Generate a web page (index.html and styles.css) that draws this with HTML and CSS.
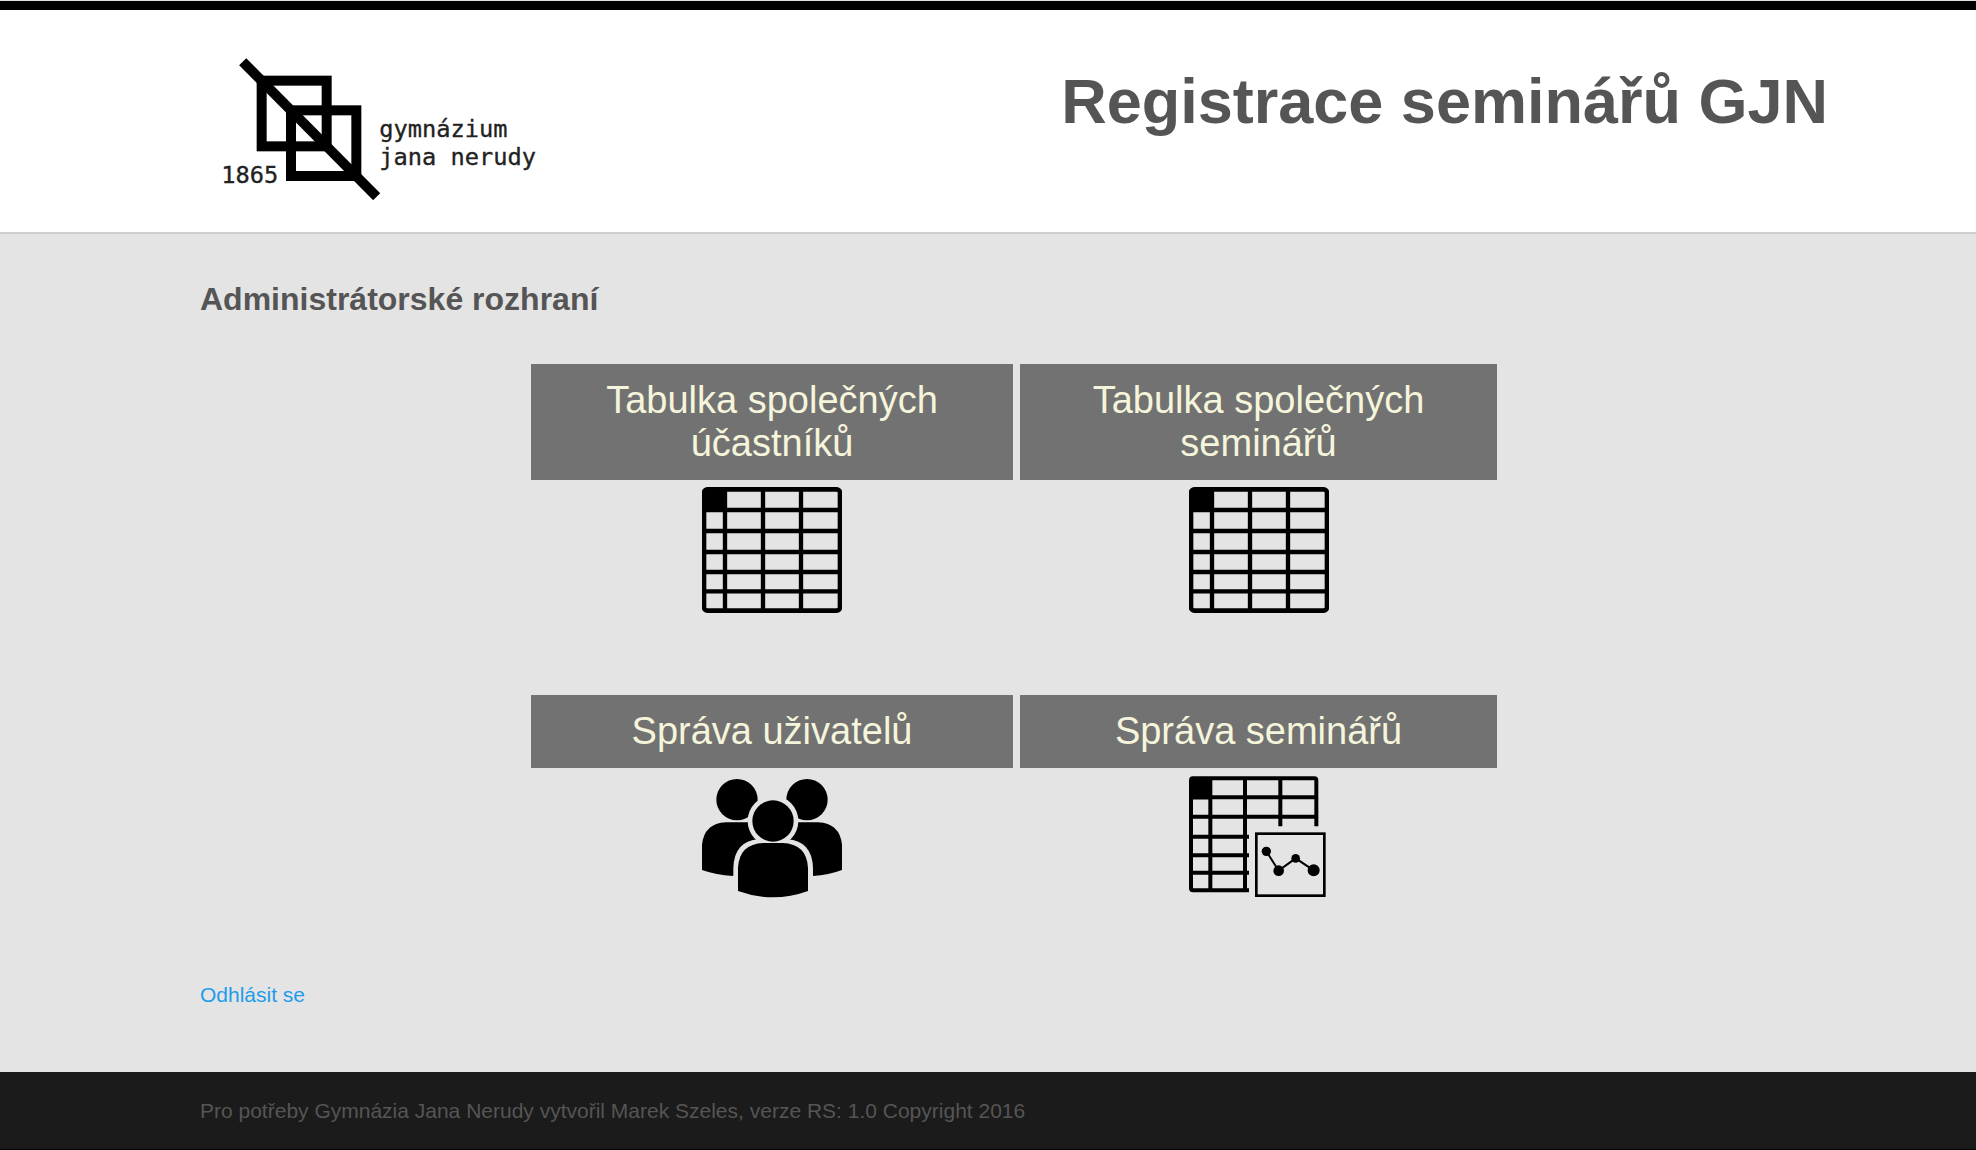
FILE: index.html
```html
<!DOCTYPE html>
<html lang="cs">
<head>
<meta charset="utf-8">
<meta name="viewport" content="width=device-width, initial-scale=1">
<title>Registrace seminářů GJN</title>
<link rel="stylesheet" href="styles.css">
</head>
<body>
<header class="site-header">
  <svg class="logo" viewBox="0 0 1080 480" role="img" aria-label="Gymnázium Jana Nerudy 1865">
    <g fill="none" stroke="#000" stroke-width="30">
      <rect x="185" y="122" width="195" height="197"/>
      <rect x="273" y="211" width="196" height="197"/>
      <path d="M128 65L530 470"/>
    </g>
    <g class="logo-text">
      <text x="64" y="430">1865</text>
      <text x="538" y="292">gymnázium</text>
      <text x="538" y="375">jana nerudy</text>
    </g>
  </svg>
  <h1 class="site-title">Registrace seminářů GJN</h1>
</header>

<main class="content">
  <h2 class="page-title">Administrátorské rozhraní</h2>
  <nav class="tiles" aria-label="Administrace">
    <a class="tile" href="#ucastnici">
      <span class="tile-label">Tabulka společných účastníků</span>
      <svg class="tile-icon" viewBox="0 0 420 420" aria-hidden="true">
        <rect x="6" y="7" width="408" height="364" rx="10" fill="none" stroke="#000" stroke-width="14"/>
        <path d="M6 10h69v65H6z"/>
        <path d="M69 6v366M183 6v366M297 6v366M6 69h408M6 132h408M6 195h408M6 255h408M6 313h408" fill="none" stroke="#000" stroke-width="13"/>
      </svg>
    </a>
    <a class="tile" href="#spolecne-seminare">
      <span class="tile-label">Tabulka společných seminářů</span>
      <svg class="tile-icon" viewBox="0 0 420 420" aria-hidden="true">
        <rect x="6" y="7" width="408" height="364" rx="10" fill="none" stroke="#000" stroke-width="14"/>
        <path d="M6 10h69v65H6z"/>
        <path d="M69 6v366M183 6v366M297 6v366M6 69h408M6 132h408M6 195h408M6 255h408M6 313h408" fill="none" stroke="#000" stroke-width="13"/>
      </svg>
    </a>
    <a class="tile" href="#uzivatele">
      <span class="tile-label">Správa uživatelů</span>
      <svg class="tile-icon" viewBox="0 0 420 420" aria-hidden="true">
        <circle cx="105" cy="74" r="62"/>
        <circle cx="315" cy="74" r="62"/>
        <path d="M0 285V210Q6 145 72 142H140L165 200L150 240L93 303Q42 300 0 285z"/>
        <path d="M420 285V210Q414 145 348 142H280L255 200L270 240L333 303Q380 300 420 285z"/>
        <g class="icon-gap">
          <circle cx="213" cy="138" r="76"/>
          <path d="M94 310V280Q96 198 170 193H256Q331 198 333 280V310z"/>
        </g>
        <circle cx="213" cy="138" r="62"/>
        <path d="M108 348V278Q112 207 184 204H242Q314 207 318 278V348Q213 386 108 348z"/>
      </svg>
    </a>
    <a class="tile" href="#seminare">
      <span class="tile-label">Správa seminářů</span>
      <svg class="tile-icon" viewBox="0 -4 420 420" aria-hidden="true">
        <path d="M6 6h63v63H6z"/>
        <path d="M180 342H12Q6 342 6 336V12Q6 6 12 6H376Q382 6 382 12V150M64 6v336M168 6v342M274 6v144M6 63h376M6 121h376M6 181h174M6 237h174M6 289h174" fill="none" stroke="#000" stroke-width="12"/>
        <rect x="202" y="172" width="204" height="186" fill="none" stroke="#000" stroke-width="8"/>
        <path d="M232 225L269 283L320 246L374 282" fill="none" stroke="#000" stroke-width="6"/>
        <circle cx="232" cy="225" r="14"/>
        <circle cx="269" cy="283" r="16"/>
        <circle cx="320" cy="246" r="13"/>
        <circle cx="374" cy="282" r="18"/>
      </svg>
    </a>
  </nav>
  <a class="logout" href="#odhlasit">Odhlásit se</a>
</main>

<footer class="site-footer">Pro potřeby Gymnázia Jana Nerudy vytvořil Marek Szeles, verze RS: 1.0 Copyright 2016</footer>
</body>
</html>
```
FILE: styles.css
```css
* {
  box-sizing: border-box;
}

body {
  margin: 0;
  background: #e4e4e4;
  border-top: 1px solid #dfe2e0;
  color: #555;
  font-family: "Liberation Sans", Arial, sans-serif;
  font-size: 21px;
  line-height: 30px;
}

.site-header {
  display: flex;
  justify-content: space-between;
  align-items: flex-start;
  padding: 30px 148px 32px 200px;
  background: #fff;
  border-top: 9px solid #000;
  border-bottom: 2px solid #cfcfcf;
}

.logo {
  display: block;
  width: 360px;
  height: 160px;
}

.logo-text {
  font-family: "DejaVu Sans Mono", "Liberation Mono", monospace;
  font-size: 71px;
  fill: #222;
  stroke: #222;
  stroke-width: 1px;
}

.site-title {
  margin: 25px 0 0;
  font-size: 63px;
  line-height: 72px;
}

.content {
  padding: 40px 148px 62px 200px;
}

.page-title {
  margin: 0 0 40px;
  font-size: 32px;
  line-height: 50px;
}

.tiles {
  display: grid;
  grid-template-columns: 482fr 477fr;
  gap: 60px 7px;
  max-width: 966px;
  margin: 0 auto;
}

.tile {
  color: beige;
  text-align: center;
  text-decoration: none;
}

.tile-label {
  display: block;
  padding: 15px 70px;
  background: #727272;
  font-size: 38px;
  line-height: 43px;
}

.tile-icon {
  display: block;
  width: 140px;
  height: 140px;
  margin: 7px auto 8px;
  fill: #000;
}

.icon-gap {
  fill: #e4e4e4;
}

.logout {
  display: inline-block;
  margin-top: 57px;
  color: #1e9ceb;
  text-decoration: none;
}

.site-footer {
  padding: 24px 148px 23px 200px;
  background: #1b1b1b;
  border-bottom: 1px solid #000;
  color: #555;
}
```
